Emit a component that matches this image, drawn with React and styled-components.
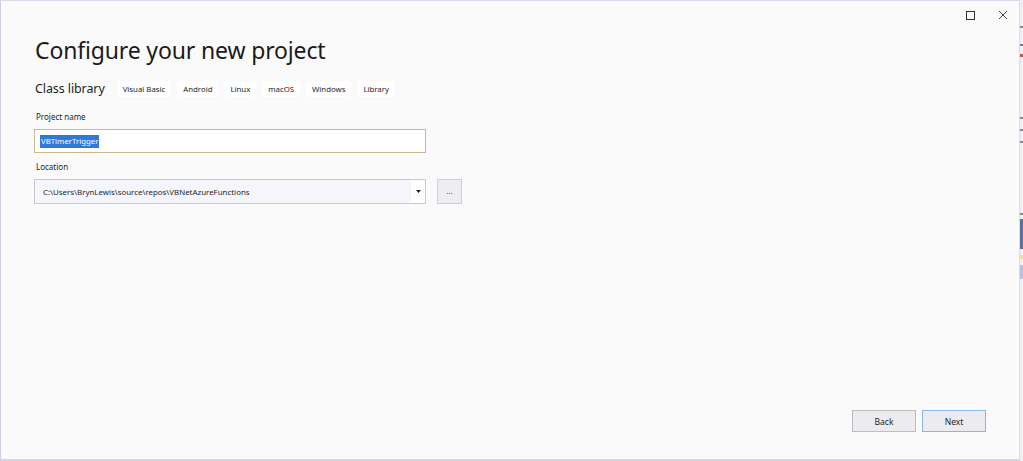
import React from "react";
import styled, { createGlobalStyle } from "styled-components";

const GlobalStyle = createGlobalStyle`
  html, body {
    margin: 0;
    padding: 0;
    background: #e9e9ef;
  }
  body {
    font-family: "Noto Sans", "Open Sans", sans-serif;
    color: #1e1e1e;
  }
`;

const Screen = styled.div`
  display: flex;
  width: 1023px;
  height: 461px;
  overflow: hidden;
`;

const Dialog = styled.div`
  flex: 0 0 1020px;
  display: flex;
  flex-direction: column;
  box-sizing: border-box;
  background: #fafafa;
  border-left: 1px solid #cfcfe3;
  border-top: 1px solid #d8d8e6;
  border-bottom: 2px solid #d4d4e2;
  border-right: 1px solid #dcdce8;
`;

const Behind = styled.div`
  flex: 1;
  display: flex;
  flex-direction: column;
  background: #f0f0f4;
  padding-top: 26px;
`;

const Speck = styled.div`
  height: ${(p) => p.h}px;
  margin-top: ${(p) => p.mt}px;
  background: ${(p) => p.c};
`;

const TitleBar = styled.div`
  display: flex;
  justify-content: flex-end;
  align-items: center;
  gap: 13px;
  height: 28px;
  padding-right: 6px;
`;

const WinButton = styled.div`
  width: 20px;
  height: 20px;
  display: flex;
  align-items: center;
  justify-content: center;
`;

const Content = styled.div`
  display: flex;
  flex-direction: column;
  padding-left: 33px;
  flex: 1;
`;

const Title = styled.h1`
  margin: 6px 0 0 1px;
  font-weight: 400;
  font-size: 23px;
  line-height: 30px;
  color: #1b1b1b;
  letter-spacing: -0.15px;
`;

const TemplateRow = styled.div`
  display: flex;
  align-items: center;
  margin-top: 16px;
  margin-left: 1px;
  gap: 6px;
`;

const TemplateName = styled.span`
  font-size: 12.5px;
  line-height: 16px;
  color: #1e1e1e;
  margin-right: 6px;
  letter-spacing: -0.1px;
`;

const Tag = styled.span`
  background: #ffffff;
  border-radius: 3px;
  padding: 2px 6px;
  font-size: 7.8px;
  line-height: 12px;
  color: #1e1e1e;
`;

const Label = styled.div`
  font-size: 8px;
  line-height: 12px;
  color: #1e1e1e;
  margin-top: ${(p) => p.mt}px;
  margin-left: 2px;
`;

const Field = styled.div`
  display: flex;
  align-items: center;
  gap: 11px;
  margin-top: 6px;
`;

const TextBox = styled.div`
  width: 392px;
  height: 24px;
  box-sizing: border-box;
  border: 1px solid #cdb98e;
  background: #ffffff;
  display: flex;
  align-items: center;
  padding-left: 5px;
`;

const Selected = styled.span`
  background: #3178d7;
  color: #ffffff;
  font-size: 7.8px;
  line-height: 13px;
  padding: 0 1px;
`;

const Combo = styled.div`
  width: 392px;
  height: 25px;
  box-sizing: border-box;
  border: 1px solid #c8c8d2;
  background: #f4f6fc;
  display: flex;
  align-items: center;
`;

const ComboText = styled.span`
  flex: 1;
  font-size: 7.9px;
  padding-left: 8px;
  color: #1e1e1e;
`;

const ComboArrow = styled.div`
  width: 14px;
  height: 100%;
  background: #ffffff;
  display: flex;
  align-items: center;
  justify-content: center;
`;

const BrowseButton = styled.div`
  width: 25px;
  height: 25px;
  box-sizing: border-box;
  border: 1px solid #cfcfd6;
  background: #eeeef2;
  display: flex;
  align-items: center;
  justify-content: center;
  font-size: 8px;
  color: #444;
  padding-bottom: 3px;
`;

const Footer = styled.div`
  display: flex;
  justify-content: flex-end;
  gap: 6px;
  padding-right: 33px;
  padding-bottom: 27px;
`;

const Button = styled.div`
  width: 64px;
  height: 22px;
  box-sizing: border-box;
  border: 1px solid ${(p) => (p.primary ? "#86b6ee" : "#bdbdc2")};
  background: #ecebf0;
  display: flex;
  align-items: center;
  justify-content: center;
  font-size: 8.5px;
  color: #1e1e1e;
`;

const tags = ["Visual Basic", "Android", "Linux", "macOS", "Windows", "Library"];

export default function App() {
  return (
    <>
      <GlobalStyle />
      <Screen>
        <Dialog>
          <TitleBar>
            <WinButton>
              <svg width="9" height="9" viewBox="0 0 9 9">
                <rect x="0.5" y="0.5" width="8" height="8" fill="none" stroke="#333" strokeWidth="1" />
              </svg>
            </WinButton>
            <WinButton>
              <svg width="10" height="10" viewBox="0 0 10 10">
                <path d="M1 1L9 9M9 1L1 9" stroke="#444" strokeWidth="1" />
              </svg>
            </WinButton>
          </TitleBar>
          <Content>
            <Title>Configure your new project</Title>
            <TemplateRow>
              <TemplateName>Class library</TemplateName>
              {tags.map((t) => (
                <Tag key={t}>{t}</Tag>
              ))}
            </TemplateRow>
            <Label mt={14}>Project name</Label>
            <Field>
              <TextBox>
                <Selected>VBTimerTrigger</Selected>
              </TextBox>
            </Field>
            <Label mt={8}>Location</Label>
            <Field>
              <Combo>
                <ComboText>C:\Users\BrynLewis\source\repos\VBNetAzureFunctions</ComboText>
                <ComboArrow>
                  <svg width="5" height="3" viewBox="0 0 5 3">
                    <path d="M0 0H5L2.5 3Z" fill="#222" />
                  </svg>
                </ComboArrow>
              </Combo>
              <BrowseButton>...</BrowseButton>
            </Field>
          </Content>
          <Footer>
            <Button>Back</Button>
            <Button primary>Next</Button>
          </Footer>
        </Dialog>
        <Behind>
          <Speck h={2} mt={0} c="#8a8a9a" />
          <Speck h={2} mt={16} c="#6d7fa8" />
          <Speck h={3} mt={8} c="#b85a5a" />
          <Speck h={2} mt={60} c="#8a8a9a" />
          <Speck h={2} mt={10} c="#8a8a9a" />
          <Speck h={2} mt={10} c="#8a8a9a" />
          <Speck h={2} mt={70} c="#8a8a9a" />
          <Speck h={30} mt={4} c="#5d6f9c" />
          <Speck h={4} mt={6} c="#e8e2a8" />
          <Speck h={14} mt={6} c="#b9c1df" />
        </Behind>
      </Screen>
    </>
  );
}
